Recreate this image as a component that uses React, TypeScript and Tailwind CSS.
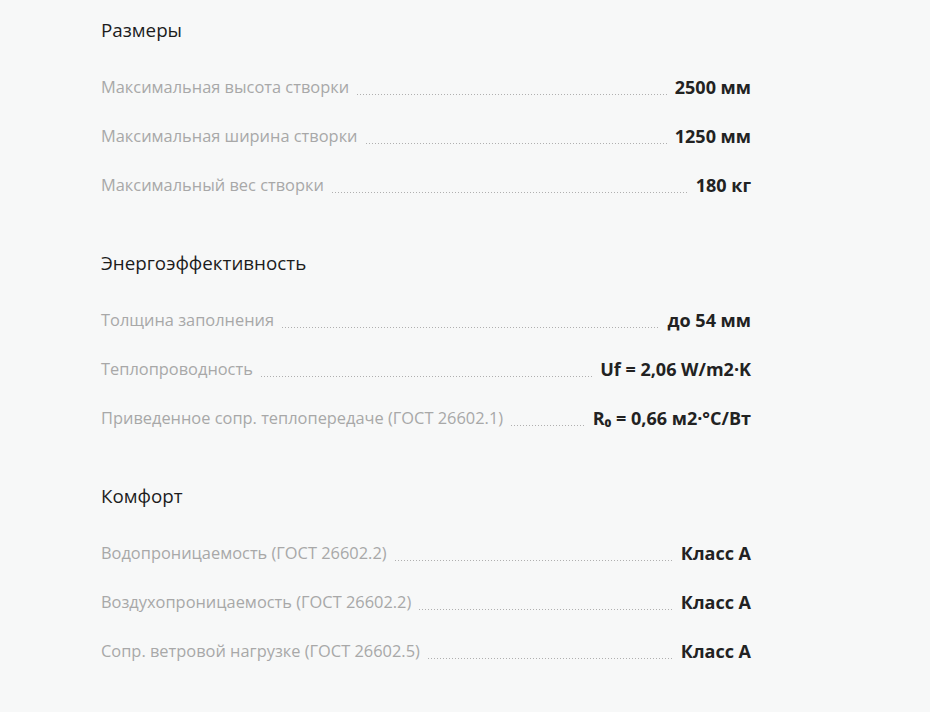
const sections = [
  {
    title: 'Размеры',
    rows: [
      { label: 'Максимальная высота створки', value: '2500 мм' },
      { label: 'Максимальная ширина створки', value: '1250 мм' },
      { label: 'Максимальный вес створки', value: '180 кг' },
    ],
  },
  {
    title: 'Энергоэффективность',
    rows: [
      { label: 'Толщина заполнения', value: 'до 54 мм' },
      { label: 'Теплопроводность', value: 'Uf = 2,06 W/m2·K' },
      { label: 'Приведенное сопр. теплопередаче (ГОСТ 26602.1)', value: 'R₀ = 0,66 м2·°C/Вт' },
    ],
  },
  {
    title: 'Комфорт',
    rows: [
      { label: 'Водопроницаемость (ГОСТ 26602.2)', value: 'Класс А' },
      { label: 'Воздухопроницаемость (ГОСТ 26602.2)', value: 'Класс А' },
      { label: 'Сопр. ветровой нагрузке (ГОСТ 26602.5)', value: 'Класс А' },
    ],
  },
];

function Row({ label, value }: { label: string; value: string }) {
  return (
    <div className="flex items-end leading-[24px]">
      <span className="text-[16.4px] text-[#a8a8a8]">{label}</span>
      <span className="mx-2 mb-[4px] h-px flex-1 bg-[linear-gradient(to_right,#b0b0b0_1px,transparent_1px)] bg-[length:3px_1px] bg-repeat-x" />
      <span className="text-[18px] font-bold text-[#222]">{value}</span>
    </div>
  );
}

export default function App() {
  return (
    <div className="min-h-[712px] bg-[#f7f8f8] font-['Open_Sans',sans-serif]">
      <div className="ml-[101px] flex w-[650px] flex-col gap-[53px] pt-[17px]">
        {sections.map((section) => (
          <section key={section.title}>
            <h2 className="mb-[32px] text-[18.8px] leading-[26px] text-[#1c1c1c]">{section.title}</h2>
            <div className="flex flex-col gap-[25px]">
              {section.rows.map((row) => (
                <Row key={row.label} label={row.label} value={row.value} />
              ))}
            </div>
          </section>
        ))}
      </div>
    </div>
  );
}
